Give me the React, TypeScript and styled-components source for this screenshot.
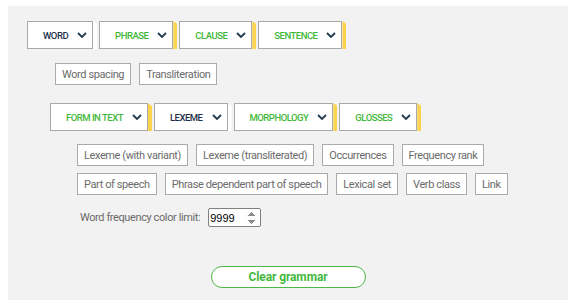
import React from "react";
import styled, { createGlobalStyle } from "styled-components";

const GlobalStyle = createGlobalStyle`
  html, body {
    margin: 0;
    padding: 0;
    background: #ffffff;
  }
  body {
    font-family: Roboto, "Liberation Sans", sans-serif;
  }
`;

const Panel = styled.div`
  margin: 6px 6px 8px 8px;
  height: 294px;
  box-sizing: border-box;
  background: #f2f2f2;
  padding: 15px 0 0 19px;
  display: flex;
  flex-direction: column;
`;

const TabRow = styled.div<{ $indent: number; $top: number }>`
  display: flex;
  gap: 2px;
  margin-left: ${(p) => p.$indent}px;
  margin-top: ${(p) => p.$top}px;
`;

const Tab = styled.div<{ $active?: boolean }>`
  position: relative;
  height: 28px;
  box-sizing: border-box;
  border: 1px solid #a9a9a9;
  background: #ffffff;
  display: flex;
  align-items: center;
  gap: 9px;
  padding: 0 5px 0 15px;
  margin-right: 4px;
  font-size: 9.5px;
  font-weight: 500;
  letter-spacing: -0.5px;
  color: ${(p) => (p.$active ? "#1c2f4a" : "#3fb83a")};

  &::after {
    content: "";
    position: absolute;
    top: -1px;
    bottom: -1px;
    right: -5px;
    width: 4px;
    background: ${(p) => (p.$active ? "#ffffff" : "#fcd34d")};
    clip-path: polygon(0 0, 100% 3px, 100% 100%, 0 100%);
  }
`;

const Chevron = () => (
  <svg width="10" height="6" viewBox="0 0 10 6">
    <path d="M1 1l4 4 4-4" fill="none" stroke="#1f3b4d" strokeWidth="1.8" />
  </svg>
);

const ChipRow = styled.div<{ $indent?: number; $top?: number }>`
  display: flex;
  gap: 8px;
  margin-left: ${(p) => p.$indent ?? 0}px;
  margin-top: ${(p) => p.$top ?? 0}px;
`;

const ChipGroup = styled.div`
  display: flex;
  flex-direction: column;
  gap: 7px;
  margin-left: 50px;
  margin-top: 13px;
`;

const Chip = styled.div`
  height: 22px;
  box-sizing: border-box;
  border: 1px solid #aaaaaa;
  background: #ffffff;
  display: flex;
  align-items: center;
  padding: 0 6px;
  font-size: 11px;
  letter-spacing: -0.4px;
  color: #6b6b6b;
  white-space: nowrap;
`;

const FreqRow = styled.div`
  display: flex;
  align-items: center;
  gap: 8px;
  margin-left: 53px;
  margin-top: 13px;
  font-size: 11px;
  letter-spacing: -0.4px;
  color: #6b6b6b;
`;

const NumberInput = styled.input`
  width: 53px;
  height: 19px;
  box-sizing: border-box;
  border: 1px solid #808080;
  border-radius: 2px;
  padding: 0 1px;
  font-family: "Liberation Sans", Arial, sans-serif;
  font-size: 11px;
  letter-spacing: 0;
  color: #000000;
  background: #ffffff;

  &::-webkit-inner-spin-button {
    opacity: 1;
  }
`;

const ClearButton = styled.button`
  align-self: center;
  margin-left: -19px;
  margin-top: 39px;
  width: 155px;
  height: 22px;
  box-sizing: border-box;
  border: 1.5px solid #4cb748;
  border-radius: 11px;
  background: #ffffff;
  font-family: Roboto, "Liberation Sans", sans-serif;
  font-weight: bold;
  font-size: 12px;
  letter-spacing: -0.1px;
  color: #44b83c;
  padding: 0;
`;

const topTabs = [
  { label: "WORD", active: true },
  { label: "PHRASE" },
  { label: "CLAUSE" },
  { label: "SENTENCE" },
];

const wordTabs = [
  { label: "FORM IN TEXT" },
  { label: "LEXEME", active: true },
  { label: "MORPHOLOGY" },
  { label: "GLOSSES" },
];

const chipRows = [
  ["Lexeme (with variant)", "Lexeme (transliterated)", "Occurrences", "Frequency rank"],
  ["Part of speech", "Phrase dependent part of speech", "Lexical set", "Verb class", "Link"],
];

export default function App() {
  return (
    <>
      <GlobalStyle />
      <Panel>
        <TabRow $indent={0} $top={0}>
          {topTabs.map((t) => (
            <Tab key={t.label} $active={t.active}>
              {t.label}
              <Chevron />
            </Tab>
          ))}
        </TabRow>
        <ChipRow $indent={28} $top={14}>
          <Chip>Word spacing</Chip>
          <Chip>Transliteration</Chip>
        </ChipRow>
        <TabRow $indent={23} $top={18}>
          {wordTabs.map((t) => (
            <Tab key={t.label} $active={t.active}>
              {t.label}
              <Chevron />
            </Tab>
          ))}
        </TabRow>
        <ChipGroup>
          {chipRows.map((row, i) => (
            <ChipRow key={i}>
              {row.map((c) => (
                <Chip key={c}>{c}</Chip>
              ))}
            </ChipRow>
          ))}
        </ChipGroup>
        <FreqRow>
          Word frequency color limit:
          <NumberInput type="number" defaultValue={9999} />
        </FreqRow>
        <ClearButton>Clear grammar</ClearButton>
      </Panel>
    </>
  );
}
